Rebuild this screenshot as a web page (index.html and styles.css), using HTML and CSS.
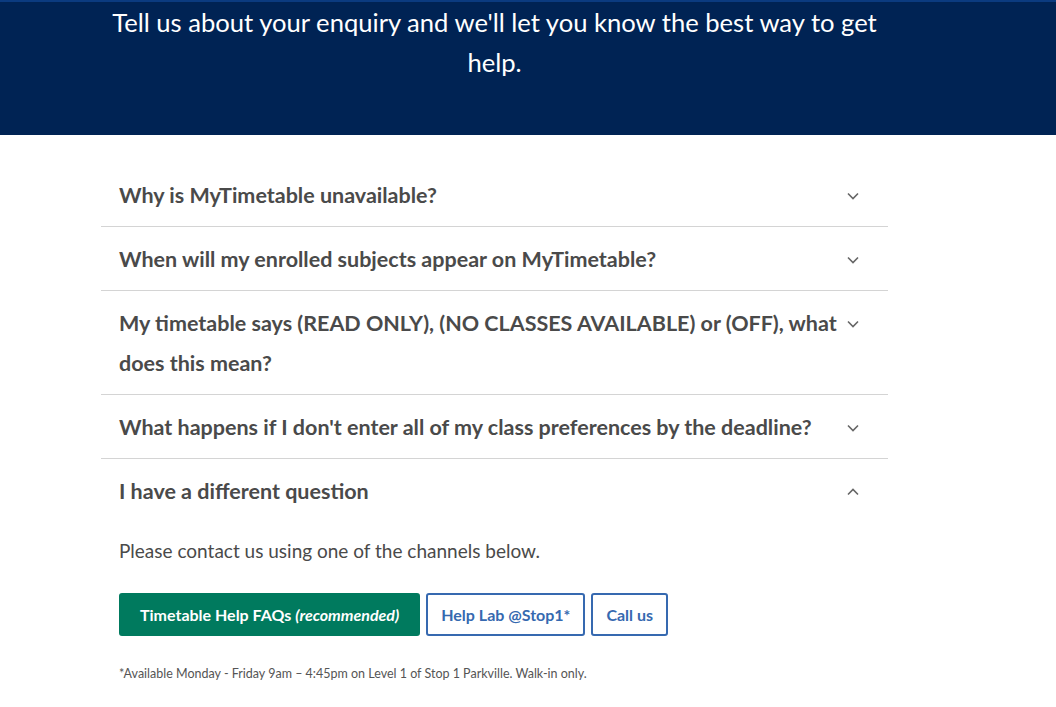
FILE: index.html
```html
<!DOCTYPE html>
<html lang="en">
<head>
    <meta charset="UTF-8">
    <meta name="viewport" content="width=device-width, initial-scale=1.0">
    <title>Timetable Help</title>
    <link rel="stylesheet" href="styles.css">
</head>
<body>
    <header class="banner">
        <div class="container">
            <p class="banner-text">Tell us about your enquiry and we'll let you know the best way to get help.</p>
        </div>
    </header>

    <main class="container">
        <div class="accordion">
            <div class="acc-item">
                <div class="acc-head">
                    <span class="acc-title">Why is MyTimetable unavailable?</span>
                    <svg class="chev" viewBox="0 0 12 8"><path d="M1 1.5l5 5 5-5"/></svg>
                </div>
            </div>
            <div class="acc-item">
                <div class="acc-head">
                    <span class="acc-title">When will my enrolled subjects appear on MyTimetable?</span>
                    <svg class="chev" viewBox="0 0 12 8"><path d="M1 1.5l5 5 5-5"/></svg>
                </div>
            </div>
            <div class="acc-item">
                <div class="acc-head">
                    <span class="acc-title">My timetable says (READ ONLY), (NO CLASSES AVAILABLE) or (OFF), what does this mean?</span>
                    <svg class="chev" viewBox="0 0 12 8"><path d="M1 1.5l5 5 5-5"/></svg>
                </div>
            </div>
            <div class="acc-item">
                <div class="acc-head">
                    <span class="acc-title">What happens if I don't enter all of my class preferences by the deadline?</span>
                    <svg class="chev" viewBox="0 0 12 8"><path d="M1 1.5l5 5 5-5"/></svg>
                </div>
            </div>
            <div class="acc-item open">
                <div class="acc-head">
                    <span class="acc-title">I have a different question</span>
                    <svg class="chev" viewBox="0 0 12 8"><path d="M1 6.5l5-5 5 5"/></svg>
                </div>
                <div class="acc-body">
                    <p class="intro">Please contact us using one of the channels below.</p>
                    <div class="buttons">
                        <a class="btn btn-primary" href="#">Timetable Help FAQs <em>(recommended)</em></a>
                        <a class="btn btn-outline" href="#">Help Lab @Stop1*</a>
                        <a class="btn btn-outline" href="#">Call us</a>
                    </div>
                    <p class="note">*Available Monday - Friday 9am – 4:45pm on Level 1 of Stop 1 Parkville. Walk-in only.</p>
                </div>
            </div>
        </div>
    </main>
</body>
</html>
```

FILE: styles.css
```css
body {
    margin: 0;
    font-family: Lato, "Open Sans", sans-serif;
    color: #4a4a4a;
    background: #fff;
}

.container {
    width: 787px;
    margin-left: 101px;
}

.banner {
    background: #002354;
    border-top: 2px solid #0b3b80;
    height: 133px;
}

.banner-text {
    margin: 0;
    color: #fff;
    font-size: 25.6px;
    line-height: 40px;
    text-align: center;
}

main {
    padding-top: 28px;
}

.acc-item {
    border-bottom: 1px solid #d4d4d4;
}

.acc-item.open {
    border-bottom: none;
}

.acc-head {
    display: flex;
    align-items: flex-start;
    padding: 12px 29px 11px 18px;
}

.acc-title {
    flex: 1;
    font-size: 21.5px;
    font-weight: 700;
    line-height: 40px;
    color: #4a4a4a;
    padding-right: 4px;
}

.chev {
    width: 12px;
    height: 8px;
    margin-top: 17px;
    fill: none;
    stroke: #666;
    stroke-width: 1.6;
}

.acc-body {
    padding: 15px 18px 0;
}

.intro {
    margin: 0;
    font-size: 19px;
    line-height: 28px;
}

.buttons {
    display: flex;
    gap: 6px;
    margin-top: 28px;
}

.btn {
    display: inline-block;
    height: 43px;
    line-height: 39px;
    box-sizing: border-box;
    border-radius: 3px;
    font-size: 16px;
    font-weight: 700;
    text-decoration: none;
}

.btn-primary {
    background: #007a5e;
    border: 2px solid #007a5e;
    color: #fff;
    padding: 0 19px;
}

.btn-outline {
    border: 2px solid #3669b0;
    color: #3669b0;
    padding: 0 13px;
}

.note {
    margin: 29px 0 0;
    font-size: 12.5px;
    line-height: 18px;
    color: #555;
}
```
